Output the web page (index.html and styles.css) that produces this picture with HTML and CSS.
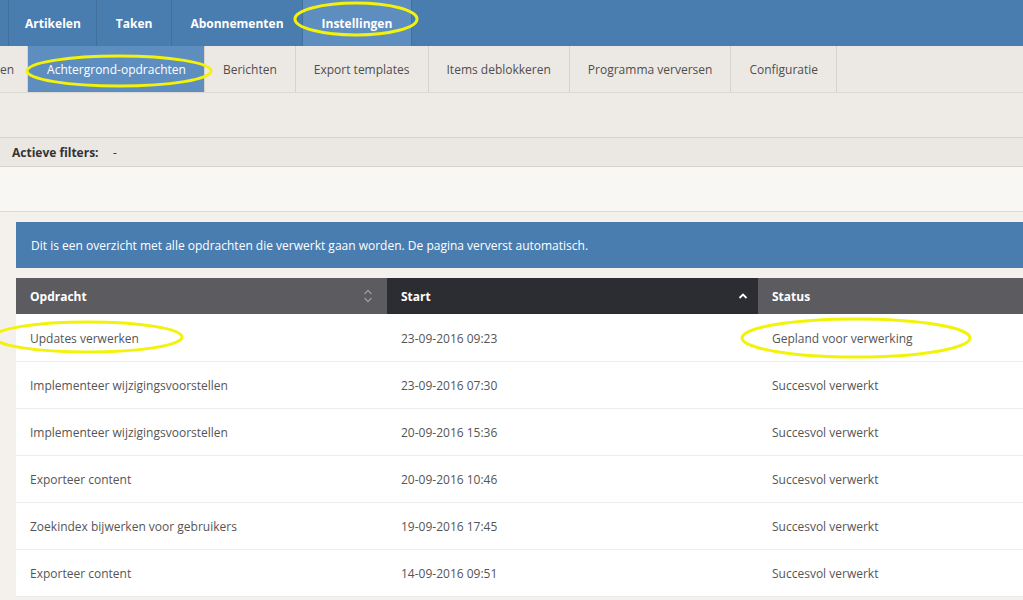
FILE: index.html
```html
<!DOCTYPE html>
<html lang="nl">
<head>
<meta charset="utf-8">
<title>Achtergrond-opdrachten</title>
<link rel="stylesheet" href="styles.css">
</head>
<body>
<div class="page">
  <nav class="topnav">
    <a class="top-item stub"></a>
    <a class="top-item">Artikelen</a>
    <a class="top-item">Taken</a>
    <a class="top-item">Abonnementen</a>
    <a class="top-item active">Instellingen</a>
  </nav>
  <nav class="subnav">
    <a class="sub-item stub">en</a>
    <a class="sub-item active">Achtergrond-opdrachten</a>
    <a class="sub-item">Berichten</a>
    <a class="sub-item">Export templates</a>
    <a class="sub-item">Items deblokkeren</a>
    <a class="sub-item">Programma verversen</a>
    <a class="sub-item">Configuratie</a>
  </nav>
  <div class="toolbar"></div>
  <div class="filters"><span class="filters-label">Actieve filters:</span><span class="filters-value">-</span></div>
  <div class="blank"></div>
  <main class="content">
    <div class="info">Dit is een overzicht met alle opdrachten die verwerkt gaan worden. De pagina ververst automatisch.</div>
    <table class="jobs">
      <thead>
        <tr>
          <th class="col-a"><div class="th-inner"><span>Opdracht</span>
            <svg class="sort" width="10" height="16" viewBox="0 0 10 16"><path d="M1.5 6 L5 2.5 L8.5 6 M1.5 10 L5 13.5 L8.5 10" fill="none" stroke="#9a9aa0" stroke-width="1.3"/></svg></div></th>
          <th class="col-b"><div class="th-inner"><span>Start</span>
            <svg class="sort" width="10" height="10" viewBox="0 0 10 10"><path d="M1.5 7 L5 3.5 L8.5 7" fill="none" stroke="#ffffff" stroke-width="1.8"/></svg></div></th>
          <th class="col-c"><div class="th-inner"><span>Status</span></div></th>
        </tr>
      </thead>
      <tbody>
        <tr><td>Updates verwerken</td><td>23-09-2016 09:23</td><td>Gepland voor verwerking</td></tr>
        <tr><td>Implementeer wijzigingsvoorstellen</td><td>23-09-2016 07:30</td><td>Succesvol verwerkt</td></tr>
        <tr><td>Implementeer wijzigingsvoorstellen</td><td>20-09-2016 15:36</td><td>Succesvol verwerkt</td></tr>
        <tr><td>Exporteer content</td><td>20-09-2016 10:46</td><td>Succesvol verwerkt</td></tr>
        <tr><td>Zoekindex bijwerken voor gebruikers</td><td>19-09-2016 17:45</td><td>Succesvol verwerkt</td></tr>
        <tr><td>Exporteer content</td><td>14-09-2016 09:51</td><td>Succesvol verwerkt</td></tr>
      </tbody>
    </table>
  </main>
  <svg class="marks" width="1023" height="600" viewBox="0 0 1023 600">
    <g fill="none" stroke="#f2f20a" stroke-width="3">
      <ellipse cx="356" cy="19" rx="61" ry="16"/>
      <ellipse cx="119" cy="71" rx="92" ry="15"/>
      <ellipse cx="88" cy="337" rx="94" ry="15"/>
      <ellipse cx="856" cy="338" rx="114" ry="19"/>
    </g>
  </svg>
</div>
</body>
</html>
```

FILE: styles.css
```css
html, body {
  margin: 0;
  padding: 0;
  overflow: hidden;
}
body {
  background: #f4f1ec;
  font-family: "Open Sans", "Liberation Sans", sans-serif;
  color: #555;
}
.page {
  position: relative;
  width: 1023px;
  height: 600px;
  overflow: hidden;
}
.topnav {
  display: flex;
  height: 46px;
  background: #4a7daf;
}
.top-item {
  display: flex;
  align-items: center;
  padding: 0 18px;
  color: #fff;
  font-weight: 700;
  font-size: 12px;
  border-right: 1px solid #41709f;
}
.top-item.stub {
  width: 8px;
  padding: 0;
}
.top-item:nth-child(2) { padding: 0 15px 0 16px; }
.top-item:nth-child(3) { padding: 0 19px; }
.top-item.active {
  background: #5e8ec0;
  padding: 0 19px;
}
.subnav {
  display: flex;
  height: 47px;
  background: #ece9e4;
  border-bottom: 1px solid #dcd8d2;
  box-sizing: border-box;
}
.sub-item {
  display: flex;
  align-items: center;
  padding: 0 18px;
  font-size: 12px;
  color: #4e4e4e;
  border-right: 1px solid #d6d2cc;
  white-space: nowrap;
}
.sub-item.stub {
  padding: 0 13px 0 0;
}
.sub-item.active {
  background: #5e8ec0;
  color: #fff;
  padding: 0 18px 0 19px;
}
.toolbar {
  height: 44px;
  background: #eeebe6;
  border-bottom: 1px solid #d8d4cd;
}
.filters {
  display: flex;
  align-items: center;
  height: 28px;
  padding-left: 12px;
  background: #ebe8e3;
  border-bottom: 1px solid #d8d4cd;
  font-size: 12px;
  color: #333;
}
.filters-label {
  font-weight: 700;
  width: 101px;
}
.blank {
  height: 44px;
  background: #f9f7f4;
  border-bottom: 1px solid #dedad3;
}
.content {
  padding: 10px 0 0 16px;
}
.info {
  width: 1040px;
  height: 46px;
  box-sizing: border-box;
  display: flex;
  align-items: center;
  padding-left: 15px;
  background: #4a7daf;
  color: #fff;
  font-size: 12px;
}
.jobs {
  margin-top: 10px;
  width: 1040px;
  border-collapse: collapse;
  table-layout: fixed;
  font-size: 12px;
}
.jobs th {
  height: 36px;
  padding: 0 14px;
  text-align: left;
  color: #fff;
  font-weight: 700;
  background: #5b5b60;
}
.jobs th.col-a { width: 343px; }
.jobs th.col-b { width: 347px; background: #2c2d32; padding-right: 10px; }
.th-inner {
  display: flex;
  align-items: center;
  justify-content: space-between;
}
.sort { display: block; }
.jobs td {
  height: 47px;
  padding: 2px 14px 0;
  box-sizing: border-box;
  background: #fff;
  color: #555;
  border-bottom: 1px solid #eeeceb;
  white-space: nowrap;
}
.marks {
  position: absolute;
  left: 0;
  top: 0;
  pointer-events: none;
}
```
